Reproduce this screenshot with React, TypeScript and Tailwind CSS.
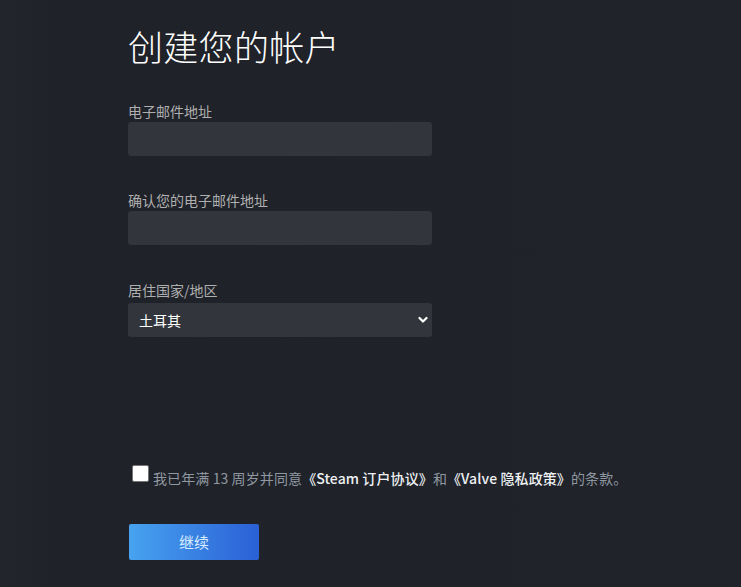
const font = { fontFamily: '"Noto Sans CJK SC", "Noto Sans", Arial, sans-serif' };

const Field = ({ label, mt, gap }: { label: string; mt: string; gap: string }) => (
  <div className={mt}>
    <div className="text-[14px] leading-[20px] text-[#afafaf]">{label}</div>
    <input className={`${gap} block h-[34px] w-[304px] rounded-[3px] bg-[#32353c] px-3 text-[14px] text-white outline-none`} />
  </div>
);

export default function App() {
  return (
    <div
      className="relative min-h-[587px] w-full overflow-hidden bg-[linear-gradient(90deg,#22252b_0px,#1f2229_60px,#20232a_100%)]"
      style={font}
    >
      <div className="pl-[128px] pt-[25px]">
        <h1 className="text-[35px] font-light leading-[42px] tracking-[0.3px] text-white">创建您的帐户</h1>

        <Field label="电子邮件地址" mt="mt-[34px]" gap="mt-px" />
        <Field label="确认您的电子邮件地址" mt="mt-[34px]" gap="mt-px" />

        <div className="mt-[35px]">
          <div className="text-[14px] leading-[20px] text-[#afafaf]">居住国家/地区</div>
          <div className="relative mt-[3px] w-[304px]">
            <select className="block h-[34px] w-full appearance-none rounded-[3px] bg-[#32353c] pl-[11px] text-[14px] text-white outline-none">
              <option>土耳其</option>
            </select>
            <svg
              className="pointer-events-none absolute right-[4px] top-[13px]"
              width="10"
              height="8"
              viewBox="0 0 10 8"
              fill="none"
              stroke="#ffffff"
              strokeWidth="2.2"
              strokeLinecap="round"
              strokeLinejoin="round"
            >
              <path d="M1.5 2 L5 5.5 L8.5 2" />
            </svg>
          </div>
        </div>

        <div className="mt-[131px] flex items-start">
          <span className="ml-[4px] mt-[-3px] block h-[17px] w-[17px] shrink-0 rounded-[2px] border border-[#767676] bg-white" />
          <p className="ml-[4px] text-[14px] leading-[20px] tracking-[0.1px] text-[#8f98a0]">
            我已年满 13 周岁并同意
            <span className="font-medium text-[#eef1f3]">《Steam 订户协议》</span>和
            <span className="font-medium text-[#eef1f3]">《Valve 隐私政策》</span>的条款。
          </p>
        </div>

        <button className="ml-px mt-[36px] flex h-[36px] w-[130px] items-center justify-center rounded-[2px] bg-[linear-gradient(90deg,#47a3f0_0%,#2a60d5_100%)] text-[15px] text-[#d6ecff]">
          继续
        </button>
      </div>
    </div>
  );
}
